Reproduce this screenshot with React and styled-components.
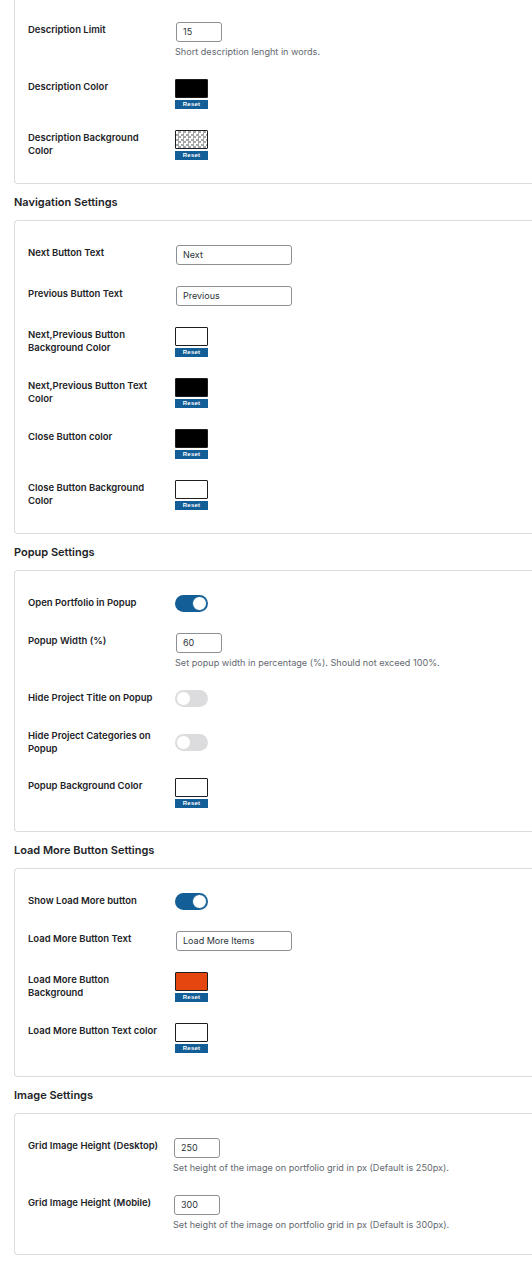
import React from 'react';
import styled, { createGlobalStyle } from 'styled-components';

const GlobalStyle = createGlobalStyle`
  body {
    margin: 0;
    background: #fff;
    font-family: Inter, "Liberation Sans", Arial, sans-serif;
    color: #1d2327;
    -webkit-font-smoothing: antialiased;
  }
`;

const Page = styled.div`
  padding: 0 0 12px 14px;
  overflow: hidden;
`;

const SectionTitle = styled.h2`
  margin: 11px 0 11px;
  font-size: 11px;
  line-height: 14px;
  font-weight: 600;
  color: #1d2327;
`;

const Card = styled.div`
  background: #fff;
  border: 1px solid #dcdcde;
  border-right: none;
  border-radius: 4px 0 0 4px;
  padding: 13px 0 13px 13px;

  ${p => p.$cutTop && `
    border-top: none;
    border-radius: 0 0 0 4px;
    padding-top: 11px;
  `}
`;

const Row = styled.div`
  display: grid;
  grid-template-columns: ${p => p.$labelWidth || 140}px 1fr;
  align-items: center;
`;

const Label = styled.div`
  align-self: start;
  padding: 13px 7px 12px 0;
  font-size: 9.5px;
  line-height: 12.5px;
  font-weight: 600;
  color: #1d2327;
`;

const Control = styled.div`
  padding: 10.5px 0 10.5px 8px;
  display: flex;
  flex-direction: column;
  align-items: flex-start;
`;

const TextInput = styled.div`
  box-sizing: border-box;
  width: ${p => p.$width}px;
  height: 20px;
  border: 1px solid #8c8f94;
  border-radius: 3px;
  padding: 0 6px;
  display: flex;
  align-items: center;
  font-size: 9px;
  color: #2c3338;
  background: #fff;
`;

const Help = styled.p`
  margin: 4px 0 0 -1px;
  font-size: 9.1px;
  line-height: 12px;
  color: #646970;
  white-space: nowrap;
`;

const Picker = styled.div`
  display: flex;
  flex-direction: column;
  gap: 2px;
  margin-left: -1px;
`;

const Swatch = styled.div`
  box-sizing: border-box;
  width: 33px;
  height: 19px;
  border: 1px solid #1e1e1e;
  border-radius: 1px;
  background: ${p => p.$color};

  ${p => p.$color === 'transparent' && `
    background-color: #fff;
    background-image: conic-gradient(#a7a7a7 25%, #fff 0 50%, #a7a7a7 0 75%, #fff 0);
    background-size: 5px 5px;
  `}
`;

const ResetButton = styled.div`
  width: 33px;
  height: 9px;
  background: #135e96;
  color: #fff;
  font-family: "Liberation Sans", Arial, sans-serif;
  font-size: 6px;
  font-weight: 700;
  line-height: 9px;
  text-align: center;
  letter-spacing: 0.2px;
`;

const Toggle = styled.div`
  position: relative;
  box-sizing: border-box;
  width: 33px;
  height: 17px;
  margin-left: -1px;
  border-radius: 9px;
  background: ${p => (p.$on ? '#135e96' : '#dcdcde')};

  &::after {
    content: '';
    position: absolute;
    top: 1px;
    left: ${p => (p.$on ? '17px' : '1px')};
    box-sizing: border-box;
    width: 15px;
    height: 15px;
    border-radius: 50%;
    background: #fff;
    border: 1px solid ${p => (p.$on ? '#135e96' : '#dcdcde')};
  }
`;

const sections = [
  {
    cutTop: true,
    rows: [
      { label: 'Description Limit', type: 'input', value: '15', width: 46, help: 'Short description lenght in words.' },
      { label: 'Description Color', type: 'color', color: '#000' },
      { label: 'Description Background Color', type: 'color', color: 'transparent' },
    ],
  },
  {
    title: 'Navigation Settings',
    rows: [
      { label: 'Next Button Text', type: 'input', value: 'Next', width: 116 },
      { label: 'Previous Button Text', type: 'input', value: 'Previous', width: 116 },
      { label: 'Next,Previous Button Background Color', type: 'color', color: '#fff' },
      { label: 'Next,Previous Button Text Color', type: 'color', color: '#000' },
      { label: 'Close Button color', type: 'color', color: '#000' },
      { label: 'Close Button Background Color', type: 'color', color: '#fff' },
    ],
  },
  {
    title: 'Popup Settings',
    rows: [
      { label: 'Open Portfolio in Popup', type: 'toggle', on: true },
      { label: 'Popup Width (%)', type: 'input', value: '60', width: 46, help: 'Set popup width in percentage (%). Should not exceed 100%.' },
      { label: 'Hide Project Title on Popup', type: 'toggle', on: false },
      { label: 'Hide Project Categories on Popup', type: 'toggle', on: false },
      { label: 'Popup Background Color', type: 'color', color: '#fff' },
    ],
  },
  {
    title: 'Load More Button Settings',
    rows: [
      { label: 'Show Load More button', type: 'toggle', on: true },
      { label: 'Load More Button Text', type: 'input', value: 'Load More Items', width: 116 },
      { label: 'Load More Button Background', type: 'color', color: '#e5460f' },
      { label: 'Load More Button Text color', type: 'color', color: '#fff' },
    ],
  },
  {
    title: 'Image Settings',
    labelWidth: 138,
    rows: [
      { label: 'Grid Image Height (Desktop)', type: 'input', value: '250', width: 46, help: 'Set height of the image on portfolio grid in px (Default is 250px).' },
      { label: 'Grid Image Height (Mobile)', type: 'input', value: '300', width: 46, help: 'Set height of the image on portfolio grid in px (Default is 300px).' },
    ],
  },
];

function Field({ row }) {
  if (row.type === 'toggle') return <Toggle $on={row.on} />;
  if (row.type === 'color') {
    return (
      <Picker>
        <Swatch $color={row.color} />
        <ResetButton>Reset</ResetButton>
      </Picker>
    );
  }
  return (
    <>
      <TextInput $width={row.width}>{row.value}</TextInput>
      {row.help && <Help>{row.help}</Help>}
    </>
  );
}

export default function App() {
  return (
    <Page>
      <GlobalStyle />
      {sections.map((section, i) => (
        <section key={i}>
          {section.title && <SectionTitle>{section.title}</SectionTitle>}
          <Card $cutTop={section.cutTop}>
            {section.rows.map(row => (
              <Row key={row.label} $labelWidth={section.labelWidth}>
                <Label>{row.label}</Label>
                <Control>
                  <Field row={row} />
                </Control>
              </Row>
            ))}
          </Card>
        </section>
      ))}
    </Page>
  );
}
